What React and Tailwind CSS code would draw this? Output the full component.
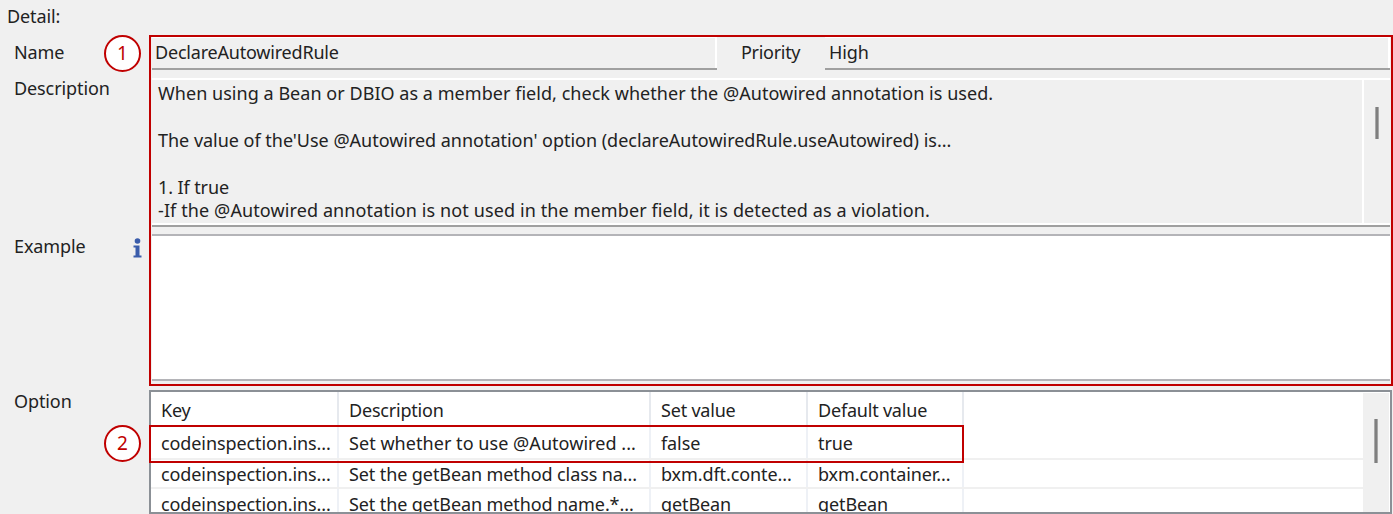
import React from 'react';

const font = { fontFamily: '"Noto Sans", "Noto Sans CJK KR", sans-serif' };

const columns = ['w-[188px]', 'w-[312px]', 'w-[157px]', 'w-[156px]'];

const rows = [
  ['codeinspection.ins...', 'Set whether to use @Autowired ...', 'false', 'true'],
  ['codeinspection.ins...', 'Set the getBean method class na...', 'bxm.dft.conte...', 'bxm.container...'],
  ['codeinspection.ins...', 'Set the getBean method name.*...', 'getBean', 'getBean'],
];

const rowStyles = ['h-[33px] leading-[32px]', 'h-[29px] leading-[28px]', 'h-[29px] leading-[30px]'];

const Marker = ({ n, className }) => (
  <div className={`absolute left-[104px] w-[37px] h-[37px] rounded-full border-2 border-[#c00000] bg-white flex items-center justify-center text-[19px] text-[#c00000] ${className}`}>
    {n}
  </div>
);

const Thumb = ({ className }) => (
  <div className={`absolute left-[11px] w-[4px] bg-[#7f7f7f] border-x border-[#a8a8a8] ${className}`}></div>
);

const Field = ({ className, children }) => (
  <div className={`h-[32px] border-t-2 border-r-2 border-white shadow-[0_2px_0_#a0a0a0] pl-[3px] leading-[29px] ${className}`}>
    {children}
  </div>
);

const InfoIcon = () => (
  <svg width="9" height="20" viewBox="0 0 9 20" className="mt-[4px] ml-[-1px]">
    <circle cx="4.5" cy="3" r="2.8" fill="#3a5cab" />
    <path d="M0.5 7.5H6.5V17.5H8.5V19.5H0.5V17.5H2.5V9.5H0.5Z" fill="#3a5cab" />
  </svg>
);

const App = () => {
  return (
    <div style={font} className="relative w-[1393px] h-[514px] overflow-hidden bg-[#f0f0f0] text-[18px] text-[#222] tracking-[-0.1px]">
      <div className="h-[36px] pl-[7px] leading-[32px]">Detail:</div>

      {/* Name / Priority */}
      <div className="flex h-[42px] pl-[14px]">
        <div className="w-[138px] leading-[33px]">Name</div>
        <Field className="w-[565px] tracking-[-0.2px]">DeclareAutowiredRule</Field>
        <div className="w-[108px] pl-[24px] leading-[33px] tracking-[-0.3px]">Priority</div>
        <Field className="w-[565px] pl-[4px]">High</Field>
      </div>

      {/* Description */}
      <div className="flex h-[156px] pl-[14px]">
        <div className="w-[138px] leading-[20px]">Description</div>
        <div className="relative flex w-[1238px] h-[147px] border-t-2 border-white shadow-[0_2px_0_#a0a0a0]">
          <div className="w-[1210px] pl-[6px] pt-[2px] leading-[23.4px] whitespace-nowrap border-b-2 border-white">
            <div className="tracking-[0.04px]">When using a Bean or DBIO as a member field, check whether the @Autowired annotation is used.</div>
            <div className="h-[23.4px]"></div>
            <div className="tracking-[-0.02px]">The value of the'Use @Autowired annotation' option (declareAutowiredRule.useAutowired) is...</div>
            <div className="h-[23.4px]"></div>
            <div>1. If true</div>
            <div className="tracking-[0.11px]">-If the @Autowired annotation is not used in the member field, it is detected as a violation.</div>
          </div>
          <div className="relative flex-1 border-l-2 border-b-2 border-white">
            <Thumb className="top-[27px] h-[32px]" />
          </div>
        </div>
      </div>

      {/* Example */}
      <div className="flex h-[156px] pl-[14px]">
        <div className="w-[120px] leading-[24px]">Example</div>
        <div className="w-[18px]">
          <InfoIcon />
        </div>
        <div className="w-[1238px] h-[147px] bg-white border-t-2 border-b-2 border-[#b4b4b8]"></div>
      </div>

      {/* Option */}
      <div className="flex pl-[14px]">
        <div className="w-[135px] leading-[22px]">Option</div>
        <div className="flex w-[1243px] h-[124px] overflow-hidden bg-white border-2 border-[#8b9096]">
          <div className="flex-1">
            <div className="flex h-[35px]">
              {['Key', 'Description', 'Set value', 'Default value'].map((title, i) => (
                <div key={title} className={`${columns[i]} pl-[10px] leading-[36px] tracking-[-0.2px] border-r-2 border-[#e6e9ee]`}>{title}</div>
              ))}
            </div>
            {rows.map((row, r) => (
              <div key={r} className={`flex border-b-2 border-[#f0f0f0] ${rowStyles[r]}`}>
                {row.map((cell, i) => (
                  <div key={i} className={`${columns[i]} pl-[10px] whitespace-nowrap overflow-hidden border-r-2 border-[#eef1f6] ${r === 0 && i === 1 ? 'tracking-[0.05px]' : ''}`}>{cell}</div>
                ))}
              </div>
            ))}
          </div>
          <div className="relative w-[26px] bg-[#f0f0f0] mr-[1px] mt-[1px]">
            <Thumb className="top-[26px] h-[44px]" />
          </div>
        </div>
      </div>

      {/* Annotations */}
      <div className="absolute left-[149px] top-[35px] w-[1244px] h-[351px] border-2 border-[#c00000]"></div>
      <div className="absolute left-[149px] top-[425px] w-[815px] h-[38px] border-2 border-[#c00000]"></div>
      <Marker n="1" className="top-[35px]" />
      <Marker n="2" className="top-[425px]" />
    </div>
  );
};

export default App;
